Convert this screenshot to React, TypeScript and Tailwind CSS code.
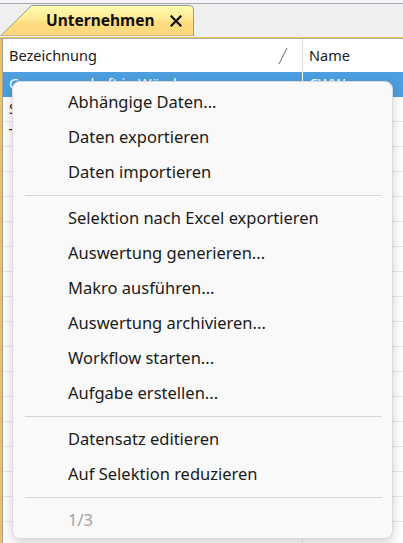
import React from 'react';

type MenuEntry = { label: string; disabled?: boolean } | 'sep';

const menu: MenuEntry[] = [
  { label: 'Abhängige Daten...' },
  { label: 'Daten exportieren' },
  { label: 'Daten importieren' },
  'sep',
  { label: 'Selektion nach Excel exportieren' },
  { label: 'Auswertung generieren...' },
  { label: 'Makro ausführen...' },
  { label: 'Auswertung archivieren...' },
  { label: 'Workflow starten...' },
  { label: 'Aufgabe erstellen...' },
  'sep',
  { label: 'Datensatz editieren' },
  { label: 'Auf Selektion reduzieren' },
  'sep',
  { label: '1/3', disabled: true },
];

const rows = [
  { name: 'Genossenschaft in Würzburg', short: 'CWW', selected: true },
  { name: 'S', short: '' },
  { name: 'T', short: '' },
];

function Tab() {
  return (
    <div className="relative mt-[6px] flex h-[31px] w-[194px] items-center">
      <svg className="absolute inset-0" width="194" height="31" viewBox="0 0 194 31">
        <defs>
          <linearGradient id="tabFill" x1="0" y1="0" x2="0" y2="1">
            <stop offset="0" stopColor="#fffbb0" />
            <stop offset="0.45" stopColor="#ffea94" />
            <stop offset="0.55" stopColor="#fedc80" />
            <stop offset="1" stopColor="#fdd67a" />
          </linearGradient>
        </defs>
        <path d="M0.5 31 L31.5 0.5 H189.5 Q193.5 0.5 193.5 4.5 V31 Z" fill="url(#tabFill)" stroke="#9a9a9a" strokeWidth="1" />
      </svg>
      <span className="relative pl-[46px] text-[15.5px] font-bold text-[#111] leading-none">Unternehmen</span>
      <svg className="relative ml-[15px]" width="12" height="12" viewBox="0 0 12 12">
        <path d="M1.5 1.5 L10.5 10.5 M10.5 1.5 L1.5 10.5" stroke="#111" strokeWidth="2.2" strokeLinecap="square" />
      </svg>
    </div>
  );
}

export default function App() {
  const emptyRows = Array.from({ length: 18 });

  return (
    <div className="relative h-[543px] w-[403px] overflow-hidden bg-white font-['Noto_Sans','Open_Sans',sans-serif] text-[#1b1b1b]">
      {/* tab strip */}
      <div className="flex h-[37px] flex-col bg-[#efefef]">
        <div className="h-[4px] shrink-0 border-b border-[#a8a8b0] bg-[#f5f5f9]" />
        <div className="-mt-[5px] flex">
          <Tab />
        </div>
      </div>
      <div className="h-[1px] bg-[#f1c75a]" />
      <div className="h-[1px] bg-[#a9a9a9]" />

      {/* grid */}
      <div className="flex h-full border-l-2 border-[#ecc35c]">
        <div className="flex-1 border-l border-[#a0a0a0]">
          <div className="flex h-[33px] items-center text-[14.5px]">
            <div className="flex w-[299px] items-center justify-between pl-[6px] pr-[14px]">
              <span>Bezeichnung</span>
              <svg width="10" height="18" viewBox="0 0 10 18">
                <path d="M9 1 L1 17" stroke="#6b6b6b" strokeWidth="1" />
              </svg>
            </div>
            <div className="h-full w-px bg-[#dedede]" />
            <div className="pl-[6px]">Name</div>
          </div>
          {rows.map((r, i) => (
            <div
              key={i}
              className={`flex h-[25px] items-center border-b text-[14.5px] ${
                r.selected ? 'border-[#4d9fe0] bg-[#4d9fe0] text-white' : 'border-[#e8e8e8]'
              }`}
            >
              <div className="w-[299px] truncate pl-[6px]">{r.name}</div>
              <div className={`h-full w-px ${r.selected ? 'bg-white' : 'bg-[#e8e8e8]'}`} />
              <div className="pl-[6px]">{r.short}</div>
            </div>
          ))}
          {emptyRows.map((_, i) => (
            <div key={i} className="flex h-[25px] border-b border-[#e8e8e8]">
              <div className="w-[299px]" />
              <div className="h-full w-px bg-[#e8e8e8]" />
            </div>
          ))}
        </div>
      </div>

      {/* context menu */}
      <div className="absolute left-[12px] top-[81px] w-[381px] rounded-[8px] border border-[#dadada] bg-[#f9f9f9] pt-[3px] shadow-[0_4px_12px_rgba(0,0,0,0.18)]">
        {menu.map((m, i) =>
          m === 'sep' ? (
            <div key={i} className="flex h-[11px] items-center pl-[12px] pr-[10px]">
              <div className="h-px w-full bg-[#d6d6d6]" />
            </div>
          ) : (
            <div
              key={i}
              className={`flex h-[35px] items-center pl-[55px] text-[16.5px] ${
                m.disabled ? 'text-[#a3a3a3]' : 'text-[#1a1a1a]'
              }`}
            >
              {m.label}
            </div>
          ),
        )}
      </div>
    </div>
  );
}
